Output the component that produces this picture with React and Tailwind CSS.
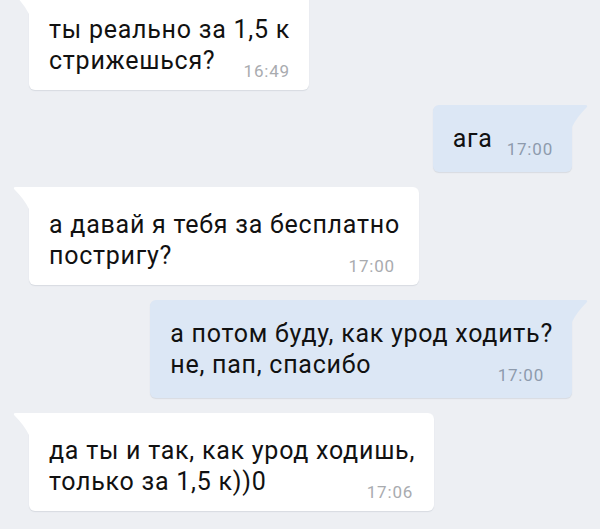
import React from 'react';

const messages = [
  { id: 1, out: false, lines: ['ты реально за 1,5 к', 'стрижешься?'], time: '16:49', timeGap: 'mr-[0px]', first: true },
  { id: 2, out: true, lines: ['ага'], time: '17:00', timeGap: 'mr-[0px]' },
  { id: 3, out: false, lines: ['а давай я тебя за бесплатно', 'постригу?'], time: '17:00', timeGap: 'mr-[5px]' },
  { id: 4, out: true, lines: ['а потом буду, как урод ходить?', 'не, пап, спасибо'], time: '17:00', timeGap: 'mr-[9px]' },
  { id: 5, out: false, lines: ['да ты и так, как урод ходишь,', 'только за 1,5 к))0'], time: '17:06', timeGap: 'mr-[2px]' },
];

const Tail = ({ out }) =>
  out ? (
    <svg width="17" height="22" viewBox="0 0 17 22" className="absolute -right-[16px] top-0">
      <path d="M0 0 H14 Q17.5 0 15.5 2.6 Q6 12 1 22 H0 Z" fill="#dce7f5" />
    </svg>
  ) : (
    <svg width="17" height="22" viewBox="0 0 17 22" className="absolute -left-[16px] top-0">
      <path d="M17 0 H3 Q-0.5 0 1.5 2.6 Q11 12 16 22 H17 Z" fill="#ffffff" />
    </svg>
  );

const Bubble = ({ msg }) => {
  const last = msg.lines[msg.lines.length - 1];
  const rest = msg.lines.slice(0, -1);

  return (
    <div className={`flex ${msg.out ? 'justify-end pr-[28px]' : 'justify-start pl-[29px]'} ${msg.first ? '-mt-[8px]' : ''}`}>
      <div
        className={`relative rounded-[6px] pl-[20px] pr-[19px] shadow-[0_1px_1px_rgba(60,75,100,0.12)] ${
          msg.out ? 'bg-[#dce7f5] rounded-tr-none pt-[18px] pb-[14px]' : 'bg-white rounded-tl-none pt-[22px] pb-[10px]'
        }`}
      >
        <Tail out={msg.out} />
        {rest.map((line, i) => (
          <div key={i} className="whitespace-nowrap text-[25px] leading-[31px] tracking-[0.75px] text-[#111111]">
            {line}
          </div>
        ))}
        <div className="flex items-start justify-between gap-[14px]">
          <span className="whitespace-nowrap text-[25px] leading-[31px] tracking-[0.75px] text-[#111111]">{last}</span>
          <span
            className={`mt-[18px] text-[17px] leading-[17px] tracking-[0.8px] whitespace-nowrap ${msg.timeGap} ${
              msg.out ? 'text-[#8e9bad]' : 'text-[#a9abaf]'
            }`}
          >
            {msg.time}
          </span>
        </div>
      </div>
    </div>
  );
};

export default function App() {
  return (
    <div className="w-[600px] h-[529px] overflow-hidden bg-[#edeff3] font-['Roboto','Noto_Sans',sans-serif]">
      <div className="flex flex-col gap-[15px]">
        {messages.map(m => (
          <Bubble key={m.id} msg={m} />
        ))}
      </div>
    </div>
  );
}
